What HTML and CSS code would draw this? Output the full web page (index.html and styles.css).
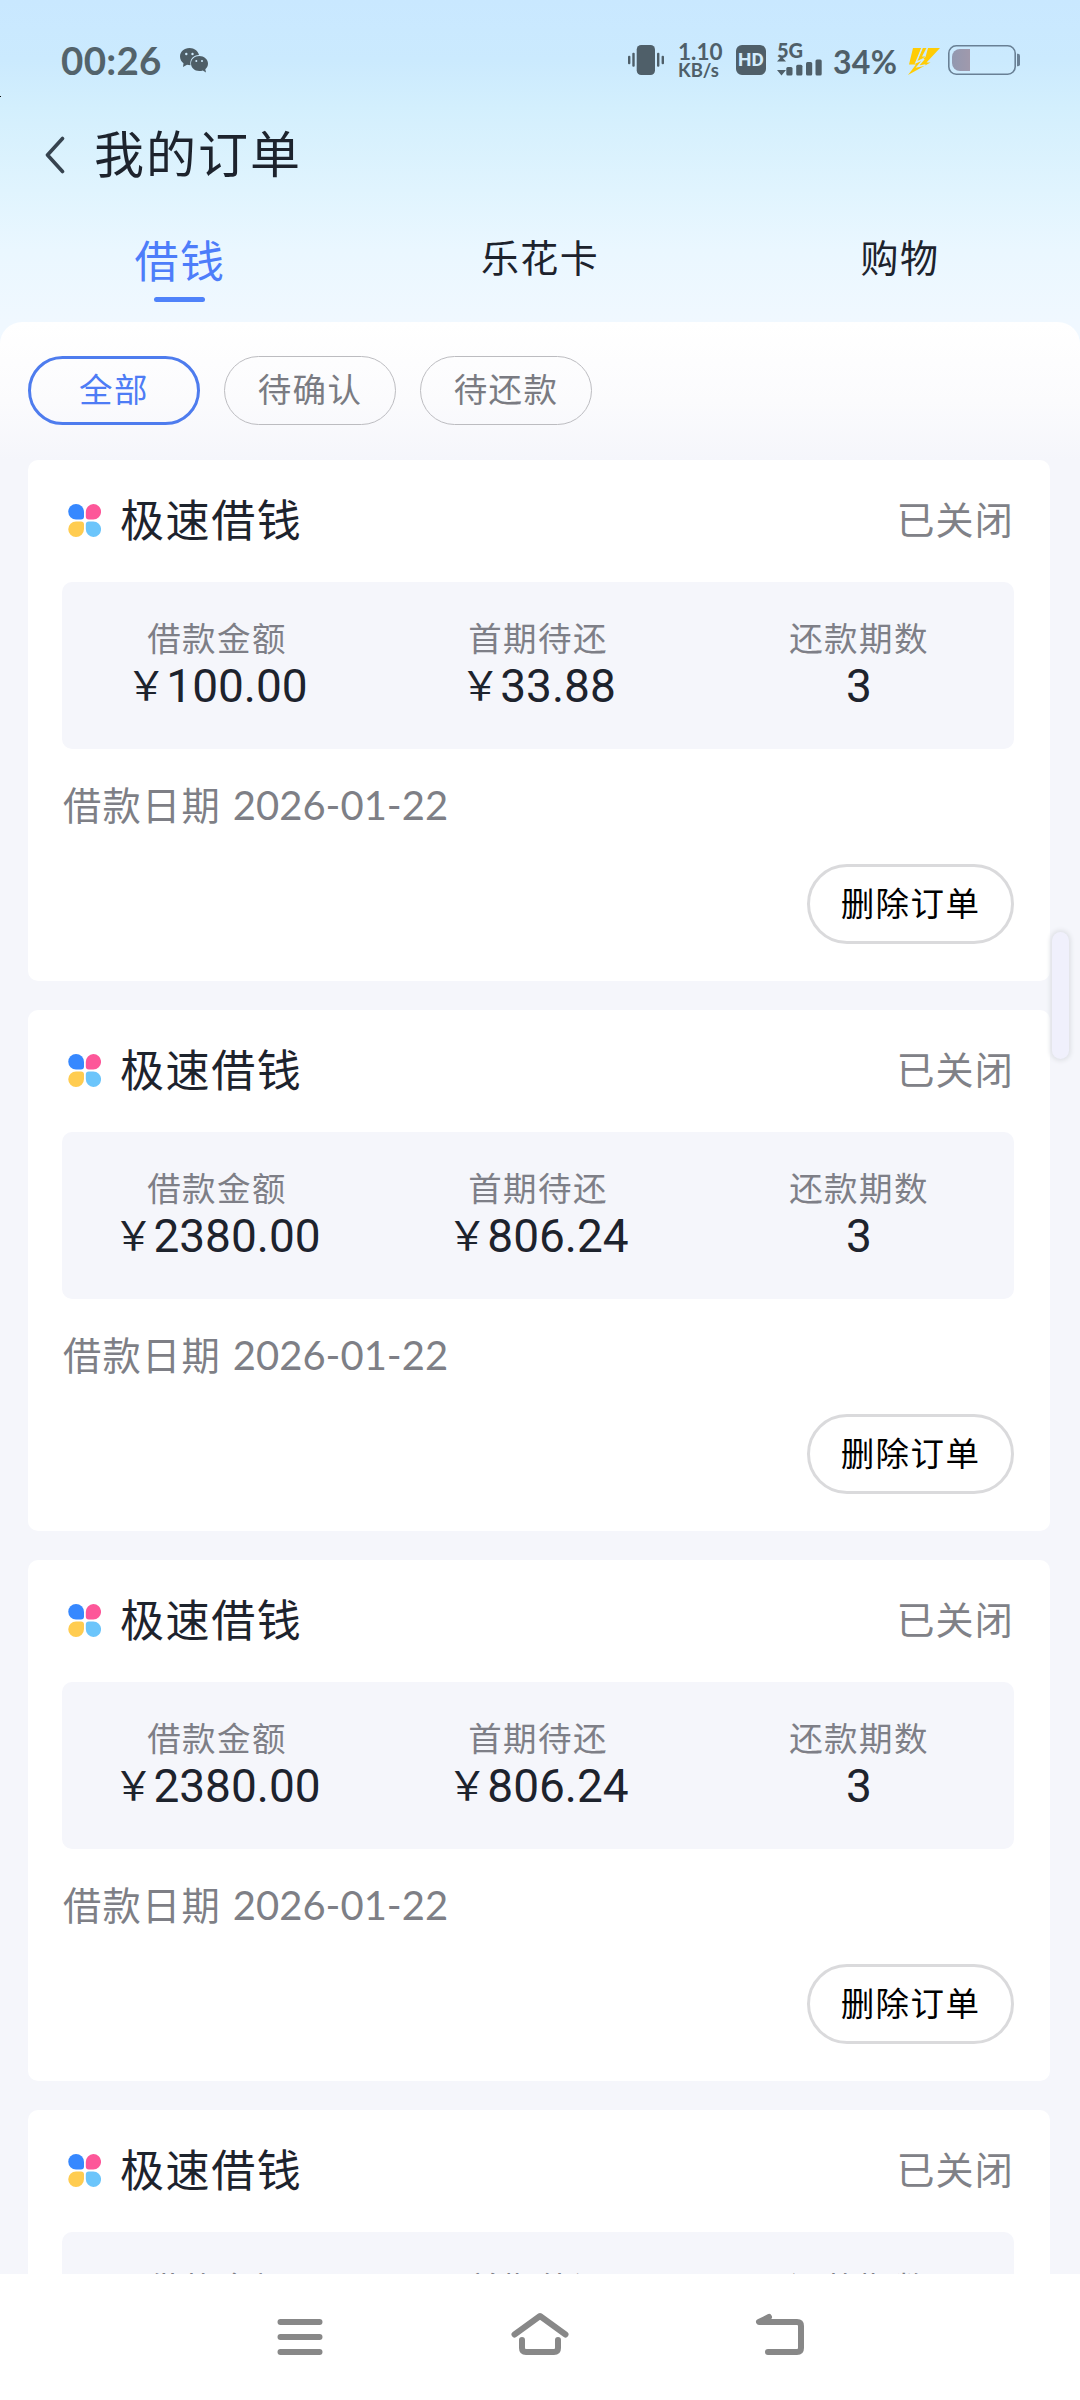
FILE: index.html
```html
<!DOCTYPE html>
<html lang="zh-CN">
<head>
<meta charset="utf-8">
<title>我的订单</title>
<link rel="stylesheet" href="styles.css">
</head>
<body>
<svg class="defs" width="0" height="0">
  <symbol id="petals" viewBox="0 0 33 33">
    <path fill="#3688ff" d="M8 0a8 8 0 0 1 8 8v4.500q0 3-3 3H8a7.750 7.750 0 0 1 0-15.500z"/>
    <path fill="#fd5799" d="M25.300 0a7.750 7.750 0 0 1 0 15.500h-4.500q-3 0-3-3V8a8 8 0 0 1 7.500-8z"/>
    <path fill="#ffcc50" d="M8 17.500h5q3 0 3 3V25a8 8 0 0 1-8 8 7.750 7.750 0 0 1 0-15.500z"/>
    <path fill="#6bc5fb" d="M20.800 17.500h4.500a7.750 7.750 0 0 1 0 15.500 8 8 0 0 1-7.500-8v-4.500q0-3 3-3z"/>
  </symbol>
</svg>
<div class="screen">
  <header class="header">
    <div class="status">
      <div class="status-left">
        <span class="clock">00:26</span>
        <svg class="wechat" width="28" height="25" viewBox="0 0 28 25">
          <path fill="#4d5d66" d="M9.500 0C4 0 0 3.700 0 8.500c0 3 1.500 5.300 3.500 6.800L3 19l4-2.200 3.500.4C9.500 11 13.500 7.200 19 7 18 3 14.500 0 9.500 0z"/>
          <path fill="#4d5d66" d="M19.300 8c-4.800 0-8.300 3.200-8.300 7.500s3.500 7.500 8.300 7.500c1.300 0 2.500-.2 3.500-.6L26 24.500l-.7-3.300c1.700-1.400 2.700-3.400 2.700-5.700C28 11.200 24 8 19.300 8z"/>
          <g fill="#cdeafd"><circle cx="6.300" cy="6" r="1.200"/><circle cx="12.500" cy="6" r="1.200"/><circle cx="16.300" cy="13" r="1"/><circle cx="22" cy="13" r="1"/></g>
        </svg>
      </div>
      <div class="status-right">
        <svg class="vibrate" width="36" height="30" viewBox="0 0 36 30" fill="#4f5f69">
          <rect x="8.700" width="18.300" height="30" rx="4.500"/>
          <rect y="10.700" width="2.400" height="8.600" rx="1"/><rect x="4.300" y="7.700" width="2.400" height="14" rx="1"/>
          <rect x="29" y="7.700" width="2.400" height="14" rx="1"/><rect x="33.600" y="10.700" width="2.400" height="8.600" rx="1"/>
        </svg>
        <div class="rate"><span class="rate-num">1.10</span><span class="rate-unit">KB/s</span></div>
        <span class="hd">HD</span>
        <div class="signal">
          <span class="net">5G</span>
          <svg class="bars" width="45" height="20" viewBox="0 0 45 20" fill="#4f5f69">
            <path d="M0 5.500l4.500-5L9 5.500zM0 14h9l-4.500 5.500z"/>
            <rect x="9.300" y="11" width="6.200" height="8.500" rx="1.500"/><rect x="19.200" y="8.800" width="6.200" height="10.700" rx="1.500"/><rect x="29" y="6" width="6.200" height="13.500" rx="1.500"/><rect x="38.500" y="3.500" width="6.200" height="16" rx="1.500"/>
          </svg>
        </div>
        <span class="percent">34%</span>
        <svg class="bolt" width="32" height="27" viewBox="0 0 32 27">
          <path fill="#ffcc05" d="M5 0h8.500L8 14.500 17.500 9 20 0h12L18.500 14.500h4L0 27l8-10.500H1z"/>
          <path fill="#ffcc05" d="M14.500 0h4l-4.500 8.500h3.500L8.500 14z"/>
          <path fill="none" stroke="#cdeafd" stroke-width="1.500" d="M14 0L8 14.500l8-3.500-6.500 7.500 8-1.500"/>
        </svg>
        <svg class="battery" width="72" height="30" viewBox="0 0 72 30">
          <defs><linearGradient id="charge"><stop offset="0" stop-color="#9298b0"/><stop offset="1" stop-color="#a099ac"/></linearGradient></defs>
          <rect x=".8" y=".8" width="66.400" height="28.400" rx="7.500" fill="none" stroke="#698095" stroke-width="1.600"/>
          <path fill="url(#charge)" d="M22 4v22H12a8 8 0 0 1-8-8v-6a8 8 0 0 1 8-8z"/>
          <path fill="#698095" d="M69 8.700h1q2 0 2 2v8.500q0 2-2 2h-1z"/>
        </svg>
      </div>
    </div>
    <div class="titlebar">
      <svg class="back" width="20" height="38" viewBox="0 0 20 38"><path d="M17.500 2.500L2.500 19l15 16.500" fill="none" stroke="#36434f" stroke-width="3.600" stroke-linecap="round" stroke-linejoin="round"/></svg>
      <h1 class="title">我的订单</h1>
    </div>
    <nav class="tabs">
      <div class="tab tab-active">借钱</div>
      <div class="tab">乐花卡</div>
      <div class="tab">购物</div>
    </nav>
  </header>
  <main class="content">
    <div class="filters">
      <span class="pill pill-active">全部</span>
      <span class="pill">待确认</span>
      <span class="pill">待还款</span>
    </div>
    <div class="orders">
      <article class="card">
        <div class="card-head"><svg class="petals"><use href="#petals"/></svg><h2 class="name">极速借钱</h2><span class="state">已关闭</span></div>
        <div class="summary">
          <div class="cell"><span class="label">借款金额</span><span class="value"><span class="yen">￥</span>100.00</span></div>
          <div class="cell"><span class="label">首期待还</span><span class="value"><span class="yen">￥</span>33.88</span></div>
          <div class="cell"><span class="label">还款期数</span><span class="value">3</span></div>
        </div>
        <div class="date">借款日期 <span class="day">2026-01-22</span></div>
        <button class="delete">删除订单</button>
      </article>
      <article class="card">
        <div class="card-head"><svg class="petals"><use href="#petals"/></svg><h2 class="name">极速借钱</h2><span class="state">已关闭</span></div>
        <div class="summary">
          <div class="cell"><span class="label">借款金额</span><span class="value"><span class="yen">￥</span>2380.00</span></div>
          <div class="cell"><span class="label">首期待还</span><span class="value"><span class="yen">￥</span>806.24</span></div>
          <div class="cell"><span class="label">还款期数</span><span class="value">3</span></div>
        </div>
        <div class="date">借款日期 <span class="day">2026-01-22</span></div>
        <button class="delete">删除订单</button>
      </article>
      <article class="card">
        <div class="card-head"><svg class="petals"><use href="#petals"/></svg><h2 class="name">极速借钱</h2><span class="state">已关闭</span></div>
        <div class="summary">
          <div class="cell"><span class="label">借款金额</span><span class="value"><span class="yen">￥</span>2380.00</span></div>
          <div class="cell"><span class="label">首期待还</span><span class="value"><span class="yen">￥</span>806.24</span></div>
          <div class="cell"><span class="label">还款期数</span><span class="value">3</span></div>
        </div>
        <div class="date">借款日期 <span class="day">2026-01-22</span></div>
        <button class="delete">删除订单</button>
      </article>
      <article class="card">
        <div class="card-head"><svg class="petals"><use href="#petals"/></svg><h2 class="name">极速借钱</h2><span class="state">已关闭</span></div>
        <div class="summary">
          <div class="cell"><span class="label">借款金额</span></div>
          <div class="cell"><span class="label">首期待还</span></div>
          <div class="cell"><span class="label">还款期数</span></div>
        </div>
      </article>
    </div>
  </main>
  <footer class="navbar">
    <svg class="nav-icon" width="60" height="46" viewBox="0 0 60 46"><path d="M10.500 10h39M10.500 25h39M10.500 40h39"/></svg>
    <svg class="nav-icon" width="60" height="46" viewBox="0 0 60 46"><path d="M4.500 22.500L30 4l25.500 18.500M12 28v8q0 4 4 4h28q4 0 4-4v-8"/></svg>
    <svg class="nav-icon" width="60" height="46" viewBox="0 0 60 46"><path d="M19 5L9 10h38q4 0 4 4v22q0 4-4 4H18"/></svg>
  </footer>
  <div class="edge-handle"></div>
</div>
</body>
</html>
```
FILE: styles.css
```css
* { box-sizing: border-box; }
body { margin: 0; font-family: "Noto Sans CJK SC", sans-serif; color: #1d232d; }
svg { display: block; flex: none; }
.defs { position: absolute; }
.screen {
  position: relative; width: 1080px; height: 2400px; overflow: hidden;
  display: flex; flex-direction: column; background: #f5f6fb;
}

.header {
  flex: none; height: 346px; margin-bottom: -24px;
  background: linear-gradient(#c9e8ff 0, #cbeafe 60px, #d3effd 108px, #e0f4fe 190px, #eaf7ff 250px, #f0f8ff 322px);
}
.header::before { content: ""; position: absolute; left: 0; top: 96px; width: 1px; height: 1px; background: #111; }
.status { height: 120px; display: flex; justify-content: space-between; padding: 0 60px; color: #4f5f69; font-family: Lato, sans-serif; }
.status-left, .status-right { display: flex; align-items: center; height: 120px; }
.clock { padding-left: 1px; font-size: 38.500px; font-weight: 700; line-height: 48px; letter-spacing: .3px; color: #53636b; width: 120px; }
.rate { display: flex; flex-direction: column; width: 58px; margin-left: 14px; font-weight: 700; }
.rate-num { font-size: 22.500px; line-height: 19px; }
.rate-unit { font-size: 18.500px; line-height: 18px; }
.hd { width: 30px; height: 30px; border-radius: 6px; background: #4f5f69; color: #d3edfd; font: 700 19px/30px Roboto, sans-serif; text-align: center; }
.signal { width: 56px; margin-left: 11px; }
.net { display: block; height: 13px; margin-top: -1px; font-size: 20px; line-height: 14px; font-weight: 900; }
.percent { width: 75px; font-size: 32px; font-weight: 700; line-height: 40px; letter-spacing: .3px; margin-top: 4px; }
.bolt { margin-top: 2px; }
.battery { margin-left: 8px; }

.titlebar { height: 68px; display: flex; align-items: center; padding-left: 45px; }
.back { margin-top: 1px; }
.title { margin: -6px 0 0 29px; font-size: 50px; letter-spacing: 2px; line-height: 68px; font-weight: 400; }
.tabs { display: grid; grid-template-columns: repeat(3, 360px); height: 134px; padding-top: 40px; text-align: center; }
.tab { font-size: 38px; letter-spacing: 1.400px; line-height: 56px; }
.tab-active { font-size: 44px; line-height: 63px; color: #4d7dfa; }
.tab-active::after { content: ""; display: block; width: 51px; height: 5px; margin: 6px 0 0 154px; border-radius: 3px; background: #4f82fa; }

.content {
  flex: 1; min-height: 0; overflow: hidden; border-radius: 22px 22px 0 0;
  background: linear-gradient(#fff 0, #fbfbfd 80px, #f5f6fb 138px);
}
.filters { display: flex; gap: 24px; padding: 34px 28px 35px; height: 138px; }
.pill { width: 172px; height: 69px; border: 1px solid #bcbcc0; border-radius: 35px; font-size: 33.500px; letter-spacing: 1.400px; line-height: 62px; text-align: center; color: #7a7b82; }
.pill-active { border: 3px solid #4e7cee; line-height: 58px; color: #4e7cf5; }

.orders { display: flex; flex-direction: column; gap: 29px; padding: 0 30px 0 28px; }
.card { flex: none; height: 521px; padding: 0 36px 0 34px; border-radius: 10px; background: #fff; }
.card-head { display: flex; align-items: center; height: 117px; margin-bottom: 5px; padding-left: 6px; }
.petals { width: 33px; height: 33px; margin-top: 3px; }
.name { flex: 1; margin: -2px 0 0 19px; font-size: 44px; letter-spacing: 1.600px; line-height: 60px; font-weight: 400; }
.state { margin-top: -2px; font-size: 38px; letter-spacing: 1.200px; line-height: 56px; color: #808187; }
.summary { display: grid; grid-template-columns: repeat(3, 321px); justify-content: center; height: 167px; padding-top: 31px; border-radius: 10px; background: #f5f6fb; }
.cell { display: flex; flex-direction: column; align-items: center; }
.label { font-size: 33.500px; letter-spacing: 1.400px; line-height: 48px; color: #7e7f87; }
.value { font: 46px/50px Roboto, sans-serif; height: 50px; }
.yen { font-family: "Noto Sans CJK SC", sans-serif; font-size: 40px; line-height: 1; vertical-align: 2px; }
.date { margin-top: 25px; height: 60px; padding-left: 1px; font-size: 38.300px; letter-spacing: 1.200px; line-height: 60px; color: #7e7f86; }
.day { margin-left: 2px; font-family: Lato, sans-serif; font-size: 40px; letter-spacing: 0; }
.delete {
  display: block; width: 207px; height: 80px; margin: 30px 0 0 auto; padding: 0 0 5px;
  border: 3px solid #dadadc; border-radius: 40px; background: #fff; color: #000;
  font: 33.500px/69px "Noto Sans CJK SC", sans-serif; letter-spacing: 1.400px;
}

.navbar { flex: none; height: 126px; display: flex; justify-content: center; gap: 180px; padding-top: 38px; background: #fff; }
.nav-icon { fill: none; stroke: #888; stroke-width: 6; stroke-linecap: round; stroke-linejoin: round; }
.edge-handle { position: absolute; left: 1052px; top: 932px; width: 17px; height: 127px; border-radius: 9px; background: #f0f0fc; box-shadow: 0 0 4px 2px #dfe1e6; }
```
